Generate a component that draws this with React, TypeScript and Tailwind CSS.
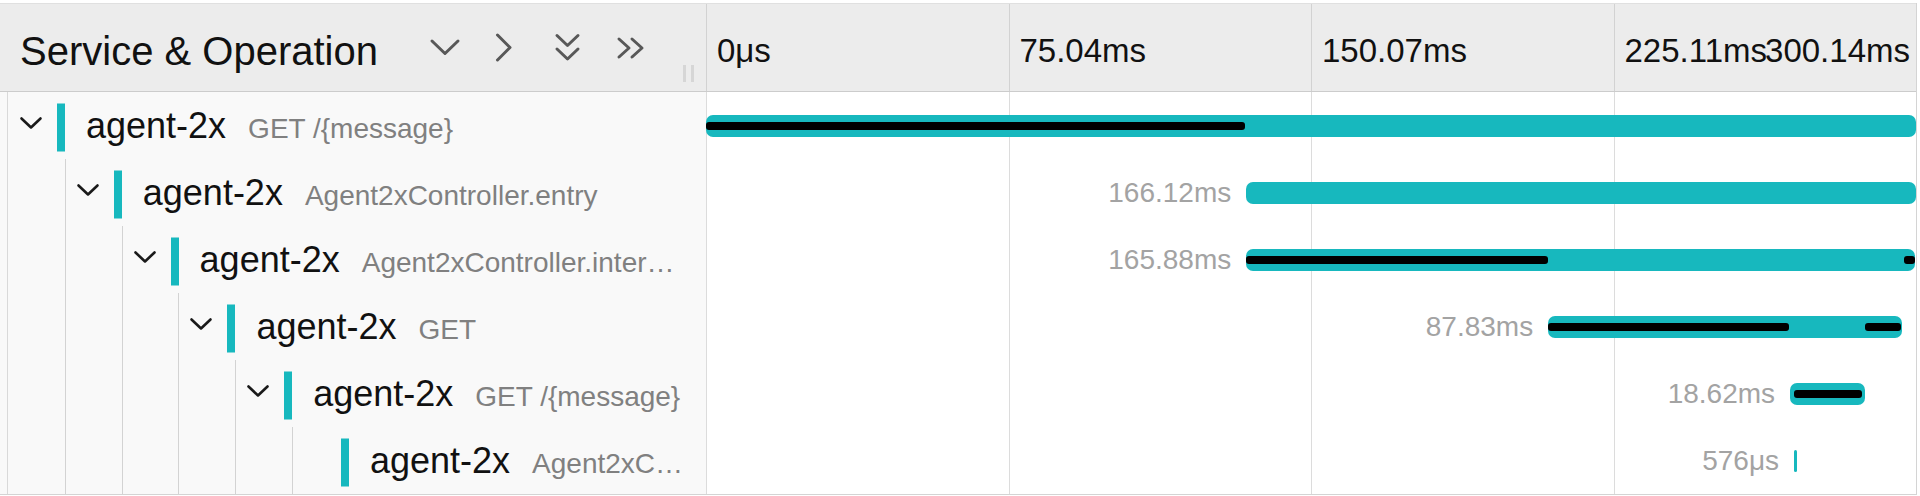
import React from 'react';

const TOTAL = 300.14;
const TL_W = 1210;
const px = (ms: number) => (ms / TOTAL) * TL_W;

type Span = {
  level: number;
  op: string;
  hasChildren: boolean;
  start: number;
  dur: number;
  label?: string;
  crit: [number, number][];
};

const spans: Span[] = [
  { level: 0, op: 'GET /{message}', hasChildren: true, start: 0, dur: 300.14, crit: [[0, 133.7]] },
  { level: 1, op: 'Agent2xController.entry', hasChildren: true, start: 134.0, dur: 166.12, label: '166.12ms', crit: [] },
  {
    level: 2,
    op: 'Agent2xController.internalCall',
    hasChildren: true,
    start: 134.0,
    dur: 165.88,
    label: '165.88ms',
    crit: [
      [134.0, 208.9],
      [297.2, 299.88],
    ],
  },
  {
    level: 3,
    op: 'GET',
    hasChildren: true,
    start: 208.9,
    dur: 87.83,
    label: '87.83ms',
    crit: [
      [208.9, 268.6],
      [287.5, 296.4],
    ],
  },
  { level: 4, op: 'GET /{message}', hasChildren: true, start: 268.9, dur: 18.62, label: '18.62ms', crit: [[269.9, 286.7]] },
  { level: 5, op: 'Agent2xController.callback', hasChildren: false, start: 269.9, dur: 0.576, label: '576μs', crit: [] },
];

function RowChevron() {
  return (
    <svg width="22" height="12" viewBox="0 0 22 12" fill="none" className="block -translate-y-[3px] overflow-visible">
      <polyline points="1.5,1.5 11,10.5 20.5,1.5" stroke="#1a1a1a" strokeWidth="2.6" strokeLinecap="round" strokeLinejoin="round" />
    </svg>
  );
}

function HeaderIcons() {
  const stroke = '#585858';
  return (
    <div className="flex items-center">
      <svg width="30" height="17" viewBox="0 0 30 17" fill="none" className="overflow-visible">
        <polyline points="2,2 15,14.5 28,2" stroke={stroke} strokeWidth="3" strokeLinejoin="round" strokeLinecap="round" />
      </svg>
      <svg width="18" height="29" viewBox="0 0 18 29" fill="none" className="ml-[35px] overflow-visible">
        <polyline points="2.5,2 15,14.5 2.5,27" stroke={stroke} strokeWidth="3" strokeLinejoin="round" strokeLinecap="round" />
      </svg>
      <svg width="25" height="29" viewBox="0 0 25 29" fill="none" className="ml-[42px] overflow-visible">
        <polyline points="2,2.5 12.5,12.5 23,2.5" stroke={stroke} strokeWidth="3" strokeLinejoin="round" strokeLinecap="round" />
        <polyline points="2,16 12.5,26 23,16" stroke={stroke} strokeWidth="3" strokeLinejoin="round" strokeLinecap="round" />
      </svg>
      <svg width="30" height="22" viewBox="0 0 30 22" fill="none" className="ml-[37px] overflow-visible">
        <polyline points="2,2 12,11 2,20" stroke={stroke} strokeWidth="3" strokeLinejoin="round" strokeLinecap="round" />
        <polyline points="15,2 25,11 15,20" stroke={stroke} strokeWidth="3" strokeLinejoin="round" strokeLinecap="round" />
      </svg>
    </div>
  );
}

function Header() {
  const ticks = ['0μs', '75.04ms', '150.07ms'];
  return (
    <div className="flex h-[89px] border-t border-b border-t-[#e0e0e0] border-b-[#cccccc] bg-[#ececec]">
      <div className="relative flex w-[706px] shrink-0 items-center pl-[20px]">
        <span className="w-[410px] shrink-0 translate-y-[3px] whitespace-nowrap text-[40px] leading-none text-[#111]">
          Service &amp; Operation
        </span>
        <HeaderIcons />
        <div className="absolute bottom-[9px] right-[12px] flex gap-[5px]">
          <div className="h-[17px] w-[3px] bg-[#d6d6d6]" />
          <div className="h-[17px] w-[3px] bg-[#d6d6d6]" />
        </div>
      </div>
      <div className="grid w-[1210px] shrink-0 grid-cols-4">
        {ticks.map((t) => (
          <div key={t} className="flex items-center border-l border-[#d2d2d2] pl-[10px]">
            <span className="translate-y-[3px] whitespace-nowrap text-[33px] leading-none text-[#111]">{t}</span>
          </div>
        ))}
        <div className="grid items-center border-l border-[#d2d2d2] pl-[10px] pr-[6px]">
          <span className="col-start-1 row-start-1 translate-y-[3px] justify-self-start whitespace-nowrap text-[33px] leading-none text-[#111]">
            225.11ms
          </span>
          <span className="col-start-1 row-start-1 translate-y-[3px] justify-self-end whitespace-nowrap text-[33px] leading-none text-[#111]">
            300.14ms
          </span>
        </div>
      </div>
    </div>
  );
}

function NameCell({ span }: { span: Span }) {
  return (
    <div className="flex h-full w-[706px] shrink-0 items-stretch bg-[#f9f9f9] pr-[20px]">
      <div className="ml-[7px] w-[2px] shrink-0 border-l border-[#d9d9d9]" />
      {Array.from({ length: span.level }).map((_, i) => (
        <div key={i} className="w-[56.8px] shrink-0 border-r border-[#d3d3d3]" />
      ))}
      <div className="flex w-[48px] shrink-0 items-center pl-[11px]">{span.hasChildren && <RowChevron />}</div>
      <div className="h-[48px] w-[8px] shrink-0 translate-y-[1.5px] self-center bg-[#17b8be]" />
      <div className="ml-[21px] min-w-0 flex-1 translate-y-[2px] self-center truncate text-[28px] leading-[44px] text-[#808080]">
        <span className="text-[36px] text-[#111]">agent-2x</span>
        <span className="ml-[22px]">{span.op}</span>
      </div>
    </div>
  );
}

function TimelineCell({ span }: { span: Span }) {
  const left = px(span.start);
  const width = Math.max(px(span.dur), 3);
  return (
    <div className="relative h-full w-[1210px] shrink-0 bg-white">
      <div className="grid h-full grid-cols-4">
        {[0, 1, 2, 3].map((i) => (
          <div key={i} className="border-l border-[#dcdcdc]" />
        ))}
      </div>
      <div className="absolute top-1/2 h-[22px] -translate-y-1/2" style={{ left, width }}>
        {span.label && (
          <span className="absolute right-full top-1/2 mr-[15px] -translate-y-1/2 whitespace-nowrap text-[28px] leading-none text-[#a3a3a3]">
            {span.label}
          </span>
        )}
        <div className="h-full w-full rounded-[7px] bg-[#17b8be]" />
        {span.crit.map(([s, e], i) => (
          <div
            key={i}
            className="absolute top-1/2 h-[8px] -translate-y-1/2 rounded-[3px] bg-black"
            style={{ left: px(s - span.start), width: px(e - s) }}
          />
        ))}
      </div>
    </div>
  );
}

export default function App() {
  return (
    <div className="h-[496px] w-[1920px] overflow-hidden bg-white pt-[3px] font-['Liberation_Sans',Arial,sans-serif]">
      <div className="w-[1917px] border-r border-b border-[#d4d4d4]">
        <Header />
        {spans.map((s, i) => (
          <div key={i} className="flex h-[67px]">
            <NameCell span={s} />
            <TimelineCell span={s} />
          </div>
        ))}
      </div>
    </div>
  );
}
